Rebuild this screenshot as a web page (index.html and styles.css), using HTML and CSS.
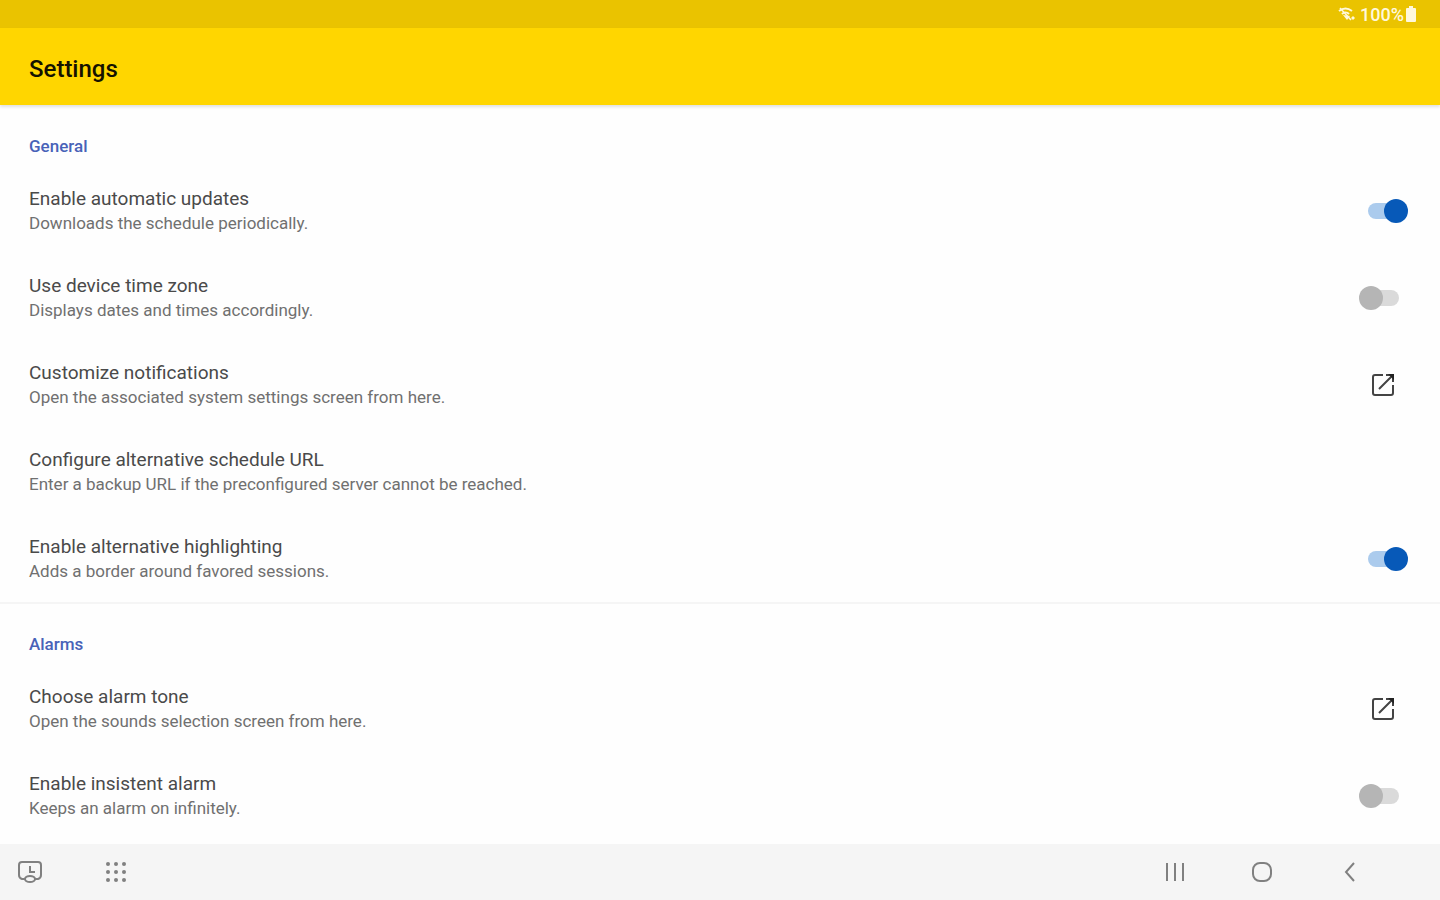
FILE: index.html
```html
<!DOCTYPE html>
<html lang="en">
<head>
    <meta charset="UTF-8">
    <meta name="viewport" content="width=device-width, initial-scale=1.0">
    <title>Settings</title>
    <link rel="stylesheet" href="styles.css">
</head>
<body>
    <div class="status-bar">
        <svg class="status-wifi" viewBox="0 0 18 14" aria-hidden="true">
            <path d="M1 4C5 1 10 1 14 4M4 7c2-2 5-2 7 0" fill="none" stroke="currentColor" stroke-width="2"/>
            <path d="M2 1l11 12" stroke="currentColor" stroke-width="1.5"/>
            <path d="M5 8l4 5 3-4zM15 9l2 2-2 2-2-2z" fill="currentColor"/>
        </svg>
        <span>100%</span>
        <svg class="status-battery" viewBox="0 0 10 16" aria-hidden="true">
            <path d="M3 0h4v2h2q1 0 1 1v12q0 1-1 1H1q-1 0-1-1V3q0-1 1-1h2z" fill="currentColor"/>
        </svg>
    </div>

    <header class="app-bar">
        <h1>Settings</h1>
    </header>

    <main class="settings">
        <section class="group">
            <h2>General</h2>
            <div class="row">
                <label class="row-text" for="auto-updates">
                    <span class="row-title">Enable automatic updates</span>
                    <span class="row-summary">Downloads the schedule periodically.</span>
                </label>
                <input type="checkbox" class="switch" id="auto-updates" checked>
            </div>
            <div class="row">
                <label class="row-text" for="device-time-zone">
                    <span class="row-title">Use device time zone</span>
                    <span class="row-summary">Displays dates and times accordingly.</span>
                </label>
                <input type="checkbox" class="switch" id="device-time-zone">
            </div>
            <button type="button" class="row">
                <span class="row-text">
                    <span class="row-title">Customize notifications</span>
                    <span class="row-summary">Open the associated system settings screen from here.</span>
                </span>
                <svg class="open-icon" viewBox="0 0 24 24" aria-hidden="true">
                    <path d="M12 2H4Q2 2 2 4v16q0 2 2 2h16q2 0 2-2v-8"/>
                    <path d="M15 2h7v7M21 3L8 16"/>
                    <path class="tip" d="M17 1h6v6z"/>
                </svg>
            </button>
            <button type="button" class="row">
                <span class="row-text">
                    <span class="row-title">Configure alternative schedule URL</span>
                    <span class="row-summary">Enter a backup URL if the preconfigured server cannot be reached.</span>
                </span>
            </button>
            <div class="row">
                <label class="row-text" for="highlighting">
                    <span class="row-title">Enable alternative highlighting</span>
                    <span class="row-summary">Adds a border around favored sessions.</span>
                </label>
                <input type="checkbox" class="switch" id="highlighting" checked>
            </div>
        </section>

        <section class="group">
            <h2>Alarms</h2>
            <button type="button" class="row">
                <span class="row-text">
                    <span class="row-title">Choose alarm tone</span>
                    <span class="row-summary">Open the sounds selection screen from here.</span>
                </span>
                <svg class="open-icon" viewBox="0 0 24 24" aria-hidden="true">
                    <path d="M12 2H4Q2 2 2 4v16q0 2 2 2h16q2 0 2-2v-8"/>
                    <path d="M15 2h7v7M21 3L8 16"/>
                    <path class="tip" d="M17 1h6v6z"/>
                </svg>
            </button>
            <div class="row">
                <label class="row-text" for="insistent-alarm">
                    <span class="row-title">Enable insistent alarm</span>
                    <span class="row-summary">Keeps an alarm on infinitely.</span>
                </label>
                <input type="checkbox" class="switch" id="insistent-alarm">
            </div>
        </section>
    </main>

    <nav class="nav-bar">
        <div class="nav-group">
            <button type="button" aria-label="Recent app">
                <svg viewBox="0 0 28 28">
                    <path d="M9 21H6q-3-1-3-4V7q0-3 3-3h16q3 0 3 3v10q0 3-3 4h-3"/>
                    <path d="M14 8v6h5"/>
                    <ellipse cx="14" cy="21" rx="5" ry="3"/>
                </svg>
            </button>
            <button type="button" aria-label="All apps">
                <svg class="dots" viewBox="0 0 28 28">
                    <circle cx="5" cy="6" r="2"/><circle cx="13" cy="6" r="2"/><circle cx="21" cy="6" r="2"/>
                    <circle cx="5" cy="14" r="2"/><circle cx="13" cy="14" r="2"/><circle cx="21" cy="14" r="2"/>
                    <circle cx="5" cy="22" r="2"/><circle cx="13" cy="22" r="2"/><circle cx="21" cy="22" r="2"/>
                </svg>
            </button>
        </div>
        <div class="nav-group">
            <button type="button" aria-label="Recents">
                <svg viewBox="0 0 28 28"><path d="M6 5v18M14 5v18M22 5v18"/></svg>
            </button>
            <button type="button" aria-label="Home">
                <svg viewBox="0 0 28 28"><rect x="5" y="5" width="18" height="18" rx="7"/></svg>
            </button>
            <button type="button" aria-label="Back">
                <svg viewBox="0 0 28 28"><path d="M19 5l-8 9 8 9"/></svg>
            </button>
        </div>
    </nav>
</body>
</html>
```
FILE: styles.css
```css
* {
    margin: 0;
    padding: 0;
    box-sizing: border-box;
}

body {
    font-family: Roboto, "Noto Sans", sans-serif;
    background: #fefefe;
    color: #4a4a4a;
    height: 100vh;
    display: flex;
    flex-direction: column;
    overflow: hidden;
}

button {
    font: inherit;
    color: inherit;
    background: none;
    border: none;
    text-align: left;
    cursor: pointer;
}

.status-bar {
    display: flex;
    align-items: center;
    justify-content: flex-end;
    padding-right: 24px;
    height: 28px;
    flex-shrink: 0;
    background: #eac300;
    color: #fff8dc;
    font-size: 18px;
    font-weight: 500;
}

.status-wifi {
    width: 18px;
    height: 14px;
    margin-right: 4px;
}

.status-battery {
    width: 10px;
    height: 16px;
    margin-left: 2px;
}

.app-bar {
    display: flex;
    align-items: center;
    height: 77px;
    flex-shrink: 0;
    padding: 4px 29px 0;
    background: #ffd600;
    box-shadow: 0 2px 3px rgba(0, 0, 0, 0.12);
}

.app-bar h1 {
    color: #151200;
    font-size: 24px;
    font-weight: 500;
}

.settings {
    flex: 1;
    min-height: 0;
    overflow: hidden;
    padding-top: 1px;
}

.group + .group {
    border-top: 2px solid #f5f5f5;
}

.group h2 {
    padding: 30px 29px 11px;
    color: #4862b8;
    font-size: 17px;
    font-weight: 500;
    line-height: 20px;
}

.row {
    display: flex;
    align-items: center;
    justify-content: space-between;
    width: 100%;
    height: 87px;
    padding: 0 32px 0 29px;
}

.row-title,
.row-summary {
    display: block;
    line-height: 24px;
}

.row-title {
    font-size: 19px;
}

.row-summary {
    color: #707070;
    font-size: 17px;
}

/* toggle: ::before is the track, ::after the thumb */
.switch {
    appearance: none;
    display: grid;
    align-items: center;
    width: 49px;
    height: 24px;
    cursor: pointer;
}

.switch::before,
.switch::after {
    content: "";
    grid-area: 1 / 1;
}

.switch::before {
    justify-self: center;
    width: 31px;
    height: 16px;
    border-radius: 8px;
    background: #dadada;
}

.switch::after {
    justify-self: start;
    width: 24px;
    height: 24px;
    border-radius: 50%;
    background: #b5b5b5;
}

.switch:checked::before {
    background: #abcbed;
}

.switch:checked::after {
    justify-self: end;
    background: #0759b8;
}

.open-icon {
    width: 24px;
    height: 24px;
    margin-right: 13px;
    fill: none;
    stroke: #444;
    stroke-width: 2;
}

.open-icon .tip {
    fill: #222;
    stroke: none;
}

.nav-bar {
    display: flex;
    align-items: center;
    justify-content: space-between;
    height: 56px;
    flex-shrink: 0;
    padding: 0 77px 0 16px;
    background: #f5f5f5;
}

.nav-group {
    display: flex;
    gap: 59px;
}

.nav-bar button {
    width: 28px;
    height: 28px;
}

.nav-bar svg {
    display: block;
    width: 28px;
    height: 28px;
    fill: none;
    stroke: #808080;
    stroke-width: 2;
}

.nav-bar .dots {
    fill: #808080;
    stroke: none;
}
```
